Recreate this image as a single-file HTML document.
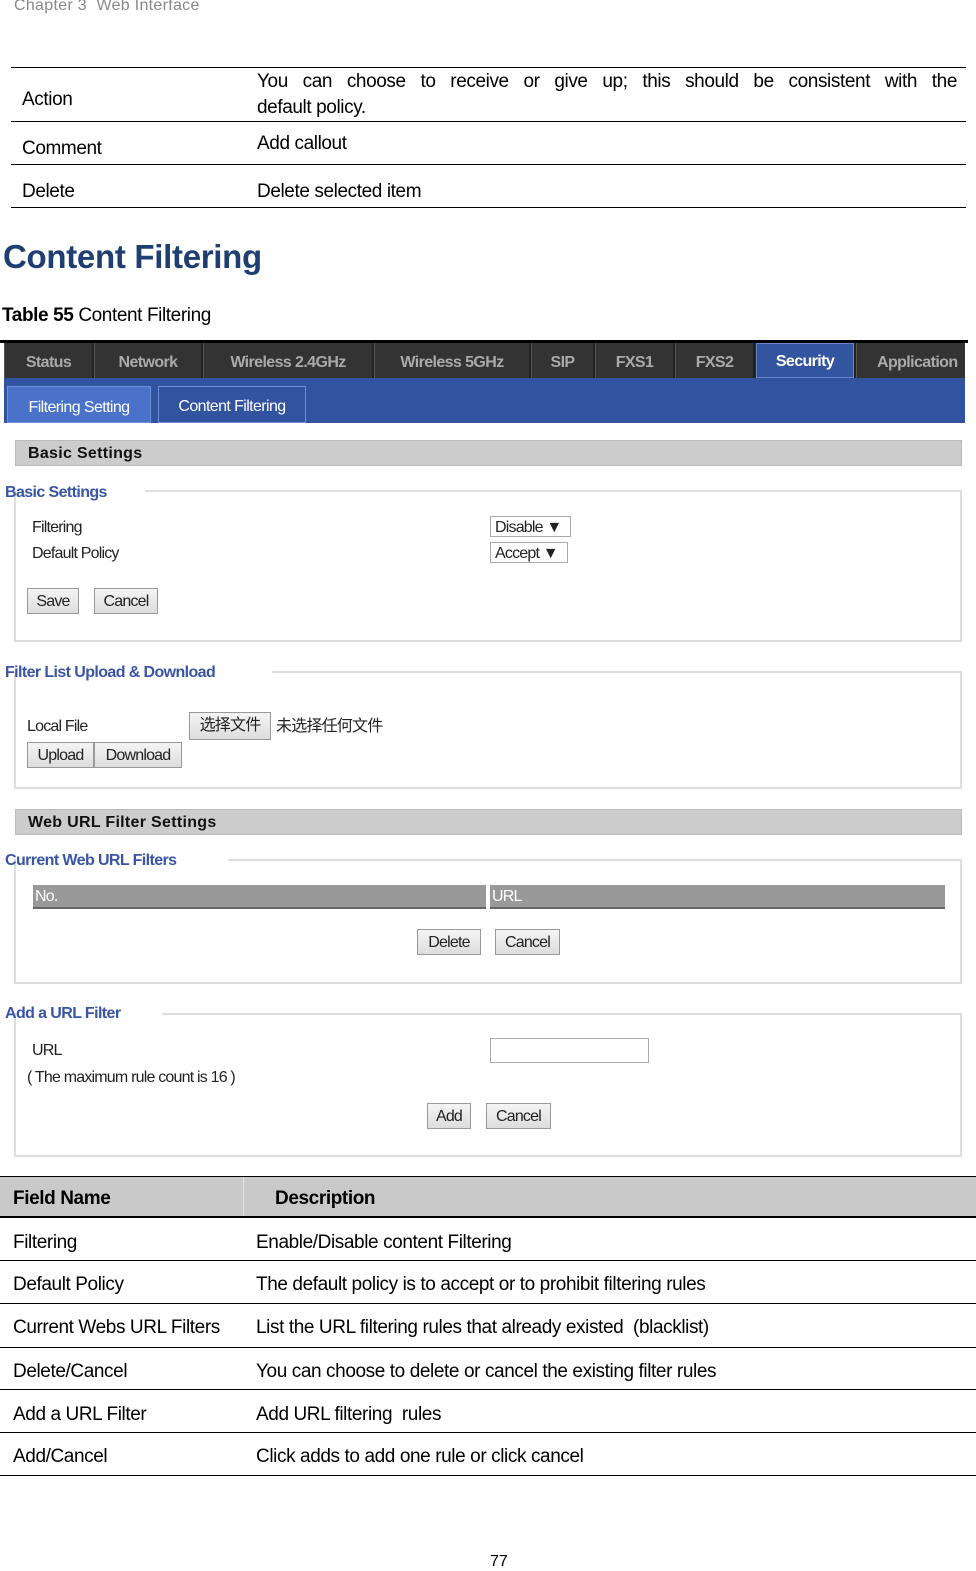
<!DOCTYPE html>
<html><head><meta charset="utf-8"><style>
*{margin:0;padding:0;box-sizing:border-box}
body{width:976px;height:1570px;position:relative;background:#fff;font-family:"Liberation Sans","Noto Sans CJK SC",sans-serif;color:#000;overflow:hidden}
.a{position:absolute;white-space:nowrap}
.d{font-size:19px;letter-spacing:-0.4px;line-height:27px}
.hl{position:absolute;height:1px;background:#000}
.u{font-size:16px;letter-spacing:-0.8px;line-height:21px;color:#222}
.tab{position:absolute;top:343px;height:35px;background:#333;color:#aaa;font-weight:bold;font-size:16px;letter-spacing:-0.6px;line-height:39px;text-align:center;border-left:1px solid #555}
.lg{position:absolute;font-weight:bold;color:#3b55a5;font-size:16px;letter-spacing:-0.6px;line-height:22px}
.fs{position:absolute;border:2px solid #ddd}
.fl{position:absolute;height:2px;background:#ddd}
.bt{position:absolute;background:linear-gradient(#f4f4f4,#ddd);border:1px solid #999;font-size:16px;letter-spacing:-0.8px;line-height:26px;text-align:center;color:#222}
.sel{position:absolute;border:1px solid #aaa;height:21px;font-size:16px;letter-spacing:-0.8px;line-height:21px;padding-left:4px;color:#222}
.gh{position:absolute;left:15px;width:947px;height:26px;background:#ccc;border:1px solid #bbb;font-weight:bold;font-size:16px;line-height:26px;padding-left:12px;letter-spacing:0.3px;color:#111}
</style></head><body>
<div class="a" style="left:14px;top:-3px;font-size:16px;color:#888;letter-spacing:0.3px">Chapter 3&nbsp; Web Interface</div>

<div class="hl" style="left:11px;width:955px;top:67px"></div>
<div class="hl" style="left:11px;width:955px;top:121px"></div>
<div class="hl" style="left:11px;width:955px;top:164px"></div>
<div class="hl" style="left:11px;width:955px;top:207px"></div>
<div class="a d" style="left:22px;top:86px">Action</div>
<div class="a d" style="left:257px;top:68px;width:700px;white-space:normal;text-align:justify;text-align-last:justify;word-spacing:6px">You can choose to receive or give up; this should be consistent with the</div>
<div class="a d" style="left:257px;top:94px">default policy.</div>
<div class="a d" style="left:22px;top:135px">Comment</div>
<div class="a d" style="left:257px;top:130px">Add callout</div>
<div class="a d" style="left:22px;top:178px">Delete</div>
<div class="a d" style="left:257px;top:178px">Delete selected item</div>

<div class="a" style="left:3px;top:238px;font-size:33px;font-weight:bold;color:#1f3f73;letter-spacing:-0.3px">Content Filtering</div>
<div class="a d" style="left:2px;top:302px"><b>Table 55</b> Content Filtering</div>

<div style="position:absolute;left:0;top:340px;width:968px;height:3px;background:#000"></div>
<div style="position:absolute;left:4px;top:343px;width:961px;height:35px;background:#222"></div>
<div class="tab" style="left:4px;width:88px">Status</div>
<div class="tab" style="left:94px;width:107px">Network</div>
<div class="tab" style="left:203px;width:169px">Wireless 2.4GHz</div>
<div class="tab" style="left:374px;width:155px">Wireless 5GHz</div>
<div class="tab" style="left:531px;width:62px">SIP</div>
<div class="tab" style="left:595px;width:78px">FXS1</div>
<div class="tab" style="left:675px;width:78px">FXS2</div>
<div class="tab" style="left:756px;width:98px;background:#3355a0;color:#fff;border:1px solid #6a86c8;line-height:35px">Security</div>
<div class="tab" style="left:856px;width:109px;text-align:left;padding-left:20px">Application</div>
<div style="position:absolute;left:4px;top:378px;width:961px;height:45px;background:#3253a0"></div>
<div class="a" style="left:7px;top:386px;width:144px;height:37px;background:#4a72c8;border:1px solid #6d8fd6;color:#fff;font-size:16px;letter-spacing:-0.6px;line-height:42px;text-align:center">Filtering Setting</div>
<div class="a" style="left:158px;top:386px;width:148px;height:37px;background:#3253a0;border:1px solid #6d8fd6;color:#fff;font-size:16px;letter-spacing:-0.6px;line-height:40px;text-align:center">Content Filtering</div>

<div class="gh" style="top:440px">Basic Settings</div>

<div class="fs" style="left:14px;top:491px;width:948px;height:151px;border-top:none"></div>
<div class="fl" style="left:145px;top:490px;width:817px"></div>
<div class="lg" style="left:5px;top:482px">Basic Settings</div>
<div class="a u" style="left:32px;top:517px">Filtering</div>
<div class="a u" style="left:32px;top:543px">Default Policy</div>
<div class="sel" style="left:490px;top:516px;width:81px">Disable ▼</div>
<div class="sel" style="left:490px;top:542px;width:78px">Accept ▼</div>
<div class="bt" style="left:27px;top:588px;width:52px;height:26px">Save</div>
<div class="bt" style="left:94px;top:588px;width:64px;height:26px">Cancel</div>

<div class="fs" style="left:14px;top:672px;width:948px;height:117px;border-top:none"></div>
<div class="fl" style="left:272px;top:671px;width:690px"></div>
<div class="lg" style="left:5px;top:662px">Filter List Upload &amp; Download</div>
<div class="a u" style="left:27px;top:716px">Local File</div>
<div class="bt" style="left:189px;top:712px;width:82px;height:28px;line-height:26px">选择文件</div>
<div class="a u" style="left:276px;top:716px">未选择任何文件</div>
<div class="bt" style="left:27px;top:742px;width:67px;height:26px">Upload</div>
<div class="bt" style="left:94px;top:742px;width:88px;height:26px">Download</div>

<div class="gh" style="top:809px">Web URL Filter Settings</div>

<div class="fs" style="left:14px;top:859px;width:948px;height:125px;border-top:none"></div>
<div class="fl" style="left:228px;top:859px;width:734px"></div>
<div class="lg" style="left:5px;top:850px">Current Web URL Filters</div>
<div class="a" style="left:33px;top:885px;width:453px;height:24px;background:#999;border-bottom:2px solid #666;color:#fff;font-size:16px;line-height:24px;padding-left:2px;letter-spacing:-0.8px">No.</div>
<div class="a" style="left:490px;top:885px;width:455px;height:24px;background:#999;border-bottom:2px solid #666;color:#fff;font-size:16px;line-height:24px;padding-left:2px;letter-spacing:-0.8px">URL</div>
<div class="bt" style="left:417px;top:929px;width:64px;height:26px">Delete</div>
<div class="bt" style="left:495px;top:929px;width:65px;height:26px">Cancel</div>

<div class="fs" style="left:14px;top:1013px;width:948px;height:144px;border-top:none"></div>
<div class="fl" style="left:162px;top:1013px;width:800px"></div>
<div class="lg" style="left:5px;top:1003px">Add a URL Filter</div>
<div class="a u" style="left:32px;top:1040px">URL</div>
<div class="a" style="left:490px;top:1038px;width:159px;height:25px;border:1px solid #aaa"></div>
<div class="a u" style="left:27px;top:1067px">( The maximum rule count is 16 )</div>
<div class="bt" style="left:427px;top:1103px;width:44px;height:26px">Add</div>
<div class="bt" style="left:486px;top:1103px;width:65px;height:26px">Cancel</div>

<div style="position:absolute;left:0;top:1176px;width:976px;height:42px;background:#c9c9c9;border-top:1px solid #000;border-bottom:2px solid #000"></div>
<div style="position:absolute;left:243px;top:1177px;width:1px;height:39px;background:#e5e5e5"></div>
<div class="a d" style="left:13px;top:1185px;font-weight:bold">Field Name</div>
<div class="a d" style="left:275px;top:1185px;font-weight:bold">Description</div>
<div class="hl" style="left:0;width:976px;top:1260px"></div>
<div class="hl" style="left:0;width:976px;top:1303px"></div>
<div class="hl" style="left:0;width:976px;top:1347px"></div>
<div class="hl" style="left:0;width:976px;top:1389px"></div>
<div class="hl" style="left:0;width:976px;top:1432px"></div>
<div class="hl" style="left:0;width:976px;top:1475px"></div>
<div class="a d" style="left:13px;top:1229px">Filtering</div>
<div class="a d" style="left:256px;top:1229px">Enable/Disable content Filtering</div>
<div class="a d" style="left:13px;top:1271px">Default Policy</div>
<div class="a d" style="left:256px;top:1271px">The default policy is to accept or to prohibit filtering rules</div>
<div class="a d" style="left:13px;top:1314px">Current Webs URL Filters</div>
<div class="a d" style="left:256px;top:1314px">List the URL filtering rules that already existed&nbsp; (blacklist)</div>
<div class="a d" style="left:13px;top:1358px">Delete/Cancel</div>
<div class="a d" style="left:256px;top:1358px">You can choose to delete or cancel the existing filter rules</div>
<div class="a d" style="left:13px;top:1401px">Add a URL Filter</div>
<div class="a d" style="left:256px;top:1401px">Add URL filtering&nbsp; rules</div>
<div class="a d" style="left:13px;top:1443px">Add/Cancel</div>
<div class="a d" style="left:256px;top:1443px">Click adds to add one rule or click cancel</div>

<div class="a" style="left:490px;top:1553px;font-size:16px">77</div>
</body></html>
